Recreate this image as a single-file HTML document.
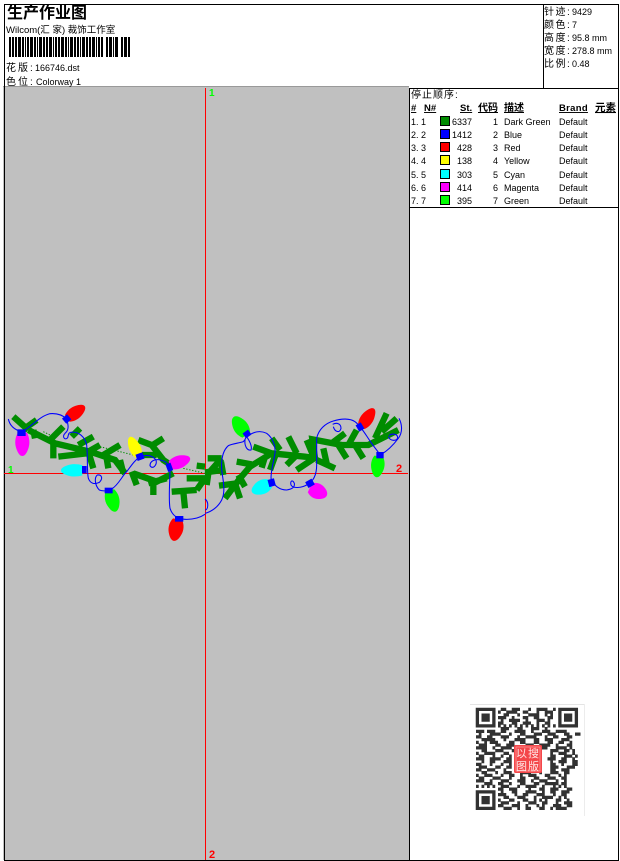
<!DOCTYPE html>
<html><head><meta charset="utf-8"><title>生产作业图</title>
<style>
html,body{margin:0;padding:0;background:#fff;width:620px;height:861px;overflow:hidden}
svg{display:block;position:absolute;left:0;top:0}
text{font-family:"Liberation Sans","WenQuanYi Zen Hei","Noto Sans CJK SC",sans-serif;font-size:9px;fill:#000}
.c{font-size:10px;letter-spacing:1.5px}
.d{font-size:10px;letter-spacing:2px}
.b{font-weight:bold;text-decoration:underline;font-size:9.5px}
.r{text-anchor:end}
</style></head><body>
<svg width="620" height="861" viewBox="0 0 620 861" xmlns="http://www.w3.org/2000/svg">
<defs><filter id="bl" x="-5%" y="-5%" width="110%" height="110%"><feGaussianBlur stdDeviation="0.35"/></filter></defs>
<rect x="3" y="86" width="406" height="774" fill="#c0c0c0"/>
<rect x="3" y="86" width="406" height="1" fill="#999"/>
<g shape-rendering="crispEdges" fill="#000">
<rect x="4" y="4" width="615" height="1"/>
<rect x="4" y="4" width="1" height="857"/>
<rect x="618" y="4" width="1" height="857"/>
<rect x="4" y="860" width="615" height="1"/>
<rect x="543" y="4" width="1" height="84"/>
<rect x="409" y="88" width="210" height="1"/>
<rect x="409" y="88" width="1" height="773"/>
<rect x="409" y="207" width="210" height="1"/>
<rect x="205" y="88" width="1" height="772" fill="#f00"/>
<rect x="4" y="473" width="404" height="1" fill="#f00"/>
</g>
<text x="7" y="18" style="font-size:16px;font-weight:bold">生产作业图</text>
<text x="6" y="33" style="font-size:9.5px">Wilcom(汇 家) 裁饰工作室</text>
<path d="M9 47H130" stroke="#000" stroke-width="20" fill="none" shape-rendering="crispEdges" stroke-dasharray="2 1 2 1 2 1 3 1 2 1 1 1 2 1 3 1 2 1 1 1 3 1 2 1 2 1 3 1 1 1 2 1 2 1 3 1 2 1 1 1 3 1 2 1 2 1 1 1 3 1 2 1 2 1 3 1 1 1 2 1 2 3 2 1 3 1 1 1 3 3 2 1 3 1 2 1"/>
<text x="6" y="71" class="d">花版:</text><text x="35" y="71">166746.dst</text>
<text x="6" y="85" class="d">色位:</text><text x="36" y="85">Colorway 1</text>
<text x="544" y="15" class="c">针迹:</text><text x="572" y="15">9429</text>
<text x="544" y="28" class="c">颜色:</text><text x="572" y="28">7</text>
<text x="544" y="41" class="c">高度:</text><text x="572" y="41">95.8 mm</text>
<text x="544" y="54" class="c">宽度:</text><text x="572" y="54">278.8 mm</text>
<text x="544" y="67" class="c">比例:</text><text x="572" y="67">0.48</text>

<text x="411" y="98" class="c" style="letter-spacing:1px">停止顺序:</text>
<text x="411" y="111" class="b">#</text><text x="424" y="111" class="b">N#</text><text x="460" y="111" class="b">St.</text><text x="478" y="111" class="b" style="font-size:10px">代码</text><text x="504" y="111" class="b" style="font-size:10px">描述</text><text x="559" y="111" class="b" style="letter-spacing:.3px">Brand</text><text x="595" y="111" class="b" style="font-size:10.5px">元素</text>

<g shape-rendering="crispEdges" stroke="#000">
<rect x="440.5" y="116.5" width="9" height="9" fill="#008c00"/>
<rect x="440.5" y="129.5" width="9" height="9" fill="#0000ff"/>
<rect x="440.5" y="142.5" width="9" height="9" fill="#ff0000"/>
<rect x="440.5" y="155.5" width="9" height="9" fill="#ffff00"/>
<rect x="440.5" y="169.5" width="9" height="9" fill="#00ffff"/>
<rect x="440.5" y="182.5" width="9" height="9" fill="#ff00ff"/>
<rect x="440.5" y="195.5" width="9" height="9" fill="#00ff00"/>
</g>
<g>
<text x="411" y="125">1. 1</text><text x="472" y="125" class="r">6337</text><text x="498" y="125" class="r">1</text><text x="504" y="125">Dark Green</text><text x="559" y="125">Default</text>
<text x="411" y="138">2. 2</text><text x="472" y="138" class="r">1412</text><text x="498" y="138" class="r">2</text><text x="504" y="138">Blue</text><text x="559" y="138">Default</text>
<text x="411" y="151">3. 3</text><text x="472" y="151" class="r">428</text><text x="498" y="151" class="r">3</text><text x="504" y="151">Red</text><text x="559" y="151">Default</text>
<text x="411" y="164">4. 4</text><text x="472" y="164" class="r">138</text><text x="498" y="164" class="r">4</text><text x="504" y="164">Yellow</text><text x="559" y="164">Default</text>
<text x="411" y="178">5. 5</text><text x="472" y="178" class="r">303</text><text x="498" y="178" class="r">5</text><text x="504" y="178">Cyan</text><text x="559" y="178">Default</text>
<text x="411" y="191">6. 6</text><text x="472" y="191" class="r">414</text><text x="498" y="191" class="r">6</text><text x="504" y="191">Magenta</text><text x="559" y="191">Default</text>
<text x="411" y="204">7. 7</text><text x="472" y="204" class="r">395</text><text x="498" y="204" class="r">7</text><text x="504" y="204">Green</text><text x="559" y="204">Default</text>
</g>

<text x="209" y="96" style="fill:#00ff00;font-size:10px;font-weight:bold">1</text>
<text x="8" y="473" style="fill:#00ff00;font-size:10px;font-weight:bold">1</text>
<text x="396" y="472" style="fill:#f00;font-size:11px;font-weight:bold">2</text>
<text x="209" y="858" style="fill:#f00;font-size:11px;font-weight:bold">2</text>

<!-- left half -->
<g transform="translate(0,395) scale(.33333)">
<g fill="none" stroke="#008c00" stroke-width="19" stroke-linecap="butt" stroke-linejoin="miter">
<path d="M85 105L165 145L270 170L345 195L375 235"/>
<path d="M40 65L85 105M110 75L75 100M100 105L105 130M190 95L150 135M160 145L160 190M240 100L215 125M280 125L235 150M300 150L265 170M175 185L260 175M360 150L310 180M265 170L280 220M320 190L325 220"/>
<path d="M415 135L455 150L490 195L520 215M490 130L450 155M425 180L470 180M395 230L410 270M400 235L470 260L520 235M500 250L445 265M460 260L460 300M360 195L370 235M560 250L615 250M515 290L590 285M550 290L555 340M590 212L615 215M590 285L615 250"/>
</g>
<path d="M130 110L170 130M300 155L400 180M550 220L615 235" stroke="#008c00" stroke-width="3" stroke-dasharray="4 5" fill="none"/>
<g fill="none" stroke="#0000ff" stroke-width="3.2">
<path d="M25 72C30 95 45 105 65 110C90 100 115 65 150 56C175 54 190 62 200 72C205 90 208 105 195 115C185 125 195 138 203 128C206 118 205 114 212 112C235 108 255 125 260 150C264 190 260 225 265 250C272 268 285 268 298 262C310 250 305 238 292 240C282 248 285 272 298 285C310 290 325 287 335 282C355 270 365 245 380 230C395 210 405 195 420 185C435 180 455 178 468 195C472 210 458 225 450 212C450 198 465 190 485 196C500 200 508 210 510 222C510 260 505 310 510 340C518 365 535 372 555 373C580 374 600 368 615 358"/>
</g>
<g>
<path transform="translate(228,52) rotate(55) scale(20,32)" fill="#ff0000" d="M-.6 1C-1 .6-1.05 .1-.85-.3C-.6-.8-.3-1 0-1C.3-1 .6-.8.85-.3C1.05.1 1 .6.6 1Z"/>
<path transform="translate(67,148) rotate(180) scale(22,35)" fill="#ff00ff" d="M-.6 1C-1 .6-1.05 .1-.85-.3C-.6-.8-.3-1 0-1C.3-1 .6-.8.85-.3C1.05.1 1 .6.6 1Z"/>
<path transform="translate(215,226) rotate(-90) scale(19,32)" fill="#00ffff" d="M-.8 1C-1 .6-1.05 .1-.85-.3C-.6-.8-.3-1 0-1C.3-1 .6-.8.85-.3C1.05.1 1 .6.8 1Z"/>
<path transform="translate(403,155) rotate(-25) scale(18,32)" fill="#ffff00" d="M-.6 1C-1 .6-1.05 .1-.85-.3C-.6-.8-.3-1 0-1C.3-1 .6-.8.85-.3C1.05.1 1 .6.6 1Z"/>
<path transform="translate(540,200) rotate(70) scale(20,32)" fill="#ff00ff" d="M-.6 1C-1 .6-1.05 .1-.85-.3C-.6-.8-.3-1 0-1C.3-1 .6-.8.85-.3C1.05.1 1 .6.6 1Z"/>
<path transform="translate(527,405) rotate(190) scale(23,33)" fill="#ff0000" d="M-.6 1C-1 .6-1.05 .1-.85-.3C-.6-.8-.3-1 0-1C.3-1 .6-.8.85-.3C1.05.1 1 .6.6 1Z"/>
<path transform="translate(338,318) rotate(165) scale(22,33)" fill="#00ff00" d="M-.6 1C-1 .6-1.05 .1-.85-.3C-.6-.8-.3-1 0-1C.3-1 .6-.8.85-.3C1.05.1 1 .6.6 1Z"/>
</g>
<g fill="#0000ff">
<rect x="190" y="62" width="20" height="20" transform="rotate(-40 200 72)"/>
<rect x="52" y="103" width="25" height="20"/>
<rect x="246" y="213" width="14" height="22"/>
<rect x="409" y="175" width="22" height="20" transform="rotate(-20 420 185)"/>
<rect x="500" y="205" width="16" height="24" transform="rotate(-20 508 217)"/>
<rect x="525" y="363" width="25" height="17"/>
<rect x="314" y="278" width="24" height="17"/>
</g>
</g>

<!-- right half -->
<g transform="translate(205,395) scale(.33333)">
<g fill="none" stroke="#008c00" stroke-width="19" stroke-linecap="butt">
<path d="M8 190L50 190M0 232L55 225M5 270L10 235L50 190M48 200L55 240"/>
<path d="M60 310L105 250L135 215L200 175M95 200L140 208M42 272L95 265M100 240L120 275M90 265L105 310M170 218L180 185M195 225L215 170"/>
<path d="M145 155L200 175L300 185L335 190M200 130L225 165M250 125L275 175M245 210L280 175M275 225L335 185"/>
<path d="M330 190L322 133L410 150L490 150L580 105M305 135L330 195M355 160L365 205M335 195L390 220M420 115L380 145M455 105L430 150M400 150L425 190M450 150L475 190M545 55L510 130M575 70L530 110"/>
</g>
<g fill="none" stroke="#0000ff" stroke-width="3.2">
<path d="M0 355C20 350 40 335 50 315C62 290 55 260 50 225C48 190 55 165 70 152C85 145 100 145 115 140C125 130 120 128 125 125C145 110 165 105 185 115C205 130 212 155 210 175C205 205 198 225 198 250C205 272 225 285 245 285C260 282 270 278 268 265C262 252 255 258 258 270C265 282 290 278 305 270C325 260 335 240 335 210L335 130C340 105 360 85 385 78C410 70 435 70 450 80C470 95 485 125 500 145C510 160 520 170 525 180C545 170 565 150 580 130C595 110 590 85 582 70"/>
<path d="M385 95C390 112 405 115 408 100C408 85 395 82 383 88"/>
<path d="M550 125C555 138 575 140 578 128C578 115 560 115 552 122"/>
<path d="M0 312C12 320 10 345 0 345"/>
<path d="M120 135C118 150 125 168 138 165C142 155 135 140 125 125"/>
</g>
<g>
<path transform="translate(105,93) rotate(-35) scale(23,33)" fill="#00ff00" d="M-.6 1C-1 .6-1.05 .1-.85-.3C-.6-.8-.3-1 0-1C.3-1 .6-.8.85-.3C1.05.1 1 .6.6 1Z"/>
<path transform="translate(168,278) rotate(-115) scale(22,30)" fill="#00ffff" d="M-.6 1C-1 .6-1.05 .1-.85-.3C-.6-.8-.3-1 0-1C.3-1 .6-.8.85-.3C1.05.1 1 .6.6 1Z"/>
<path transform="translate(340,290) rotate(115) scale(24,28)" fill="#ff00ff" d="M-.6 1C-1 .6-1.05 .1-.85-.3C-.6-.8-.3-1 0-1C.3-1 .6-.8.85-.3C1.05.1 1 .6.6 1Z"/>
<path transform="translate(488,68) rotate(35) scale(20,33)" fill="#ff0000" d="M-.6 1C-1 .6-1.05 .1-.85-.3C-.6-.8-.3-1 0-1C.3-1 .6-.8.85-.3C1.05.1 1 .6.6 1Z"/>
<path transform="translate(518,215) rotate(185) scale(21,32)" fill="#00ff00" d="M-.6 1C-1 .6-1.05 .1-.85-.3C-.6-.8-.3-1 0-1C.3-1 .6-.8.85-.3C1.05.1 1 .6.6 1Z"/>
</g>
<g fill="#0000ff">
<rect x="116" y="108" width="20" height="18" transform="rotate(-35 126 117)"/>
<rect x="190" y="252" width="20" height="22" transform="rotate(-15 200 263)"/>
<rect x="304" y="255" width="22" height="20" transform="rotate(-30 315 265)"/>
<rect x="456" y="85" width="18" height="22" transform="rotate(-30 465 96)"/>
<rect x="514" y="171" width="22" height="19"/>
</g>
</g>

<!-- QR -->
<rect x="470" y="704" width="114" height="1" fill="#e4e4e4"/>
<rect x="584" y="704" width="1" height="112" fill="#ececec"/>
<g filter="url(#bl)">
<g transform="translate(476,708) scale(2.75)" fill="none" stroke="#333" stroke-width="1.2">
<path d="M.5 .5h6v6h-6zM30.5 .5h6v6h-6zM.5 30.5h6v6h-6z"/>
<path d="M2 2h3v3h-3zM32 2h3v3h-3zM2 32h3v3h-3z" fill="#333" stroke="none"/>
<path d="M9 .5h2m2 0h3m3 0h1m2 0h4m2 0h1
M8 1.5h1m2 0h4m2 0h2m3 0h1m2 0h3
M10 2.5h2m3 0h1m3 0h4m2 0h1m1 0h1
M8 3.5h3m2 0h1m3 0h2m2 0h2m3 0h2
M9 4.5h1m2 0h4m2 0h1m3 0h3m1 0h1
M8 5.5h2m3 0h2m2 0h3m2 0h1m2 0h2
M8 6.5h1m1 0h1m1 0h1m1 0h1m1 0h1m1 0h1m1 0h1m1 0h1m1 0h1m1 0h1m1 0h1
M9 7.5h3m3 0h2m3 0h3m2 0h1
M0 8.5h3m1 0h3m2 0h2m3 0h4m2 0h1m3 0h3m2 0h4
M1 9.5h1m3 0h4m3 0h1m3 0h2m3 0h3m2 0h3m3 0h2m2 0h2
M0 10.5h2m2 0h2m3 0h3m3 0h1m2 0h4m3 0h1m2 0h2m3 0h2
M2 11.5h5m3 0h1m3 0h4m3 0h2m2 0h3m3 0h3
M0 12.5h1m2 0h1m1 0h3m4 0h2m2 0h2m3 0h2m3 0h2m2 0h2m2 0h1
M1 13.5h3m3 0h2m2 0h3m4 0h3m2 0h4m2 0h1m3 0h2
M0 14.5h4m2 0h1m2 0h4m3 0h1m2 0h1m3 0h3m3 0h4m1 0h1
M2 15.5h2m3 0h3m3 0h1m3 0h2m8 0h3m2 0h2m1 0h1
M0 16.5h1m2 0h4m3 0h2m15 0h1m2 0h3m2 0h1
M1 17.5h2m3 0h1m2 0h1m2 0h1m14 0h2m3 0h3m1 0h1
M0 18.5h3m2 0h4m2 0h2m13 0h3m2 0h2m2 0h1
M2 19.5h1m2 0h2m3 0h3m14 0h1m2 0h3m2 0h2
M0 20.5h2m3 0h1m3 0h1m2 0h1m14 0h2m2 0h1m3 0h2
M1 21.5h3m3 0h2m2 0h2m14 0h3m3 0h3
M0 22.5h2m2 0h3m3 0h1m3 0h1m2 0h2m3 0h2m3 0h2m2 0h3
M2 23.5h2m3 0h1m2 0h3m3 0h4m3 0h1m3 0h3m2 0h2
M0 24.5h1m2 0h3m3 0h1m2 0h2m2 0h1m2 0h3m3 0h2m3 0h1m1 0h1
M1 25.5h2m3 0h3m3 0h1m3 0h2m3 0h2m3 0h3m2 0h2
M0 26.5h3m2 0h1m3 0h3m3 0h3m2 0h1m2 0h3m3 0h1m2 0h1
M3 27.5h3m2 0h2m2 0h1m3 0h2m3 0h2m2 0h5m1 0h2
M0 28.5h1m1 0h1m1 0h1m1 0h1m2 0h3m3 0h1m2 0h4m2 0h1m3 0h1m1 0h1m1 0h1
M8 29.5h2m2 0h3m4 0h1m3 0h2m2 0h3m3 0h2
M9 30.5h1m3 0h2m3 0h4m2 0h1m2 0h2m2 0h3
M8 31.5h3m3 0h1m2 0h2m3 0h3m3 0h1m2 0h2
M10 32.5h2m3 0h3m3 0h1m2 0h4m2 0h1m1 0h1
M8 33.5h1m3 0h2m3 0h2m2 0h1m1 0h1m1 0h1m3 0h2m2 0h1
M9 34.5h3m3 0h1m3 0h3m2 0h2m3 0h1m2 0h3
M8 35.5h2m3 0h3m2 0h1m3 0h1m1 0h1m3 0h3m2 0h2
M10 36.5h3m2 0h1m2 0h2m3 0h2m2 0h1m1 0h4"/>
</g>
</g>
<rect x="514" y="745" width="28" height="28" rx="1.5" fill="#f4474a"/>
<rect x="516" y="747" width="24" height="24" fill="none" stroke="#ffb0b0" stroke-width=".6"/>
<text x="516" y="757" style="font-size:11px;fill:#ffe4e4">以</text>
<text x="528" y="757" style="font-size:11px;fill:#ffe4e4">搜</text>
<text x="516" y="770" style="font-size:11px;fill:#ffe4e4">图</text>
<text x="528" y="770" style="font-size:11px;fill:#ffe4e4">版</text>
</svg>
</body></html>
